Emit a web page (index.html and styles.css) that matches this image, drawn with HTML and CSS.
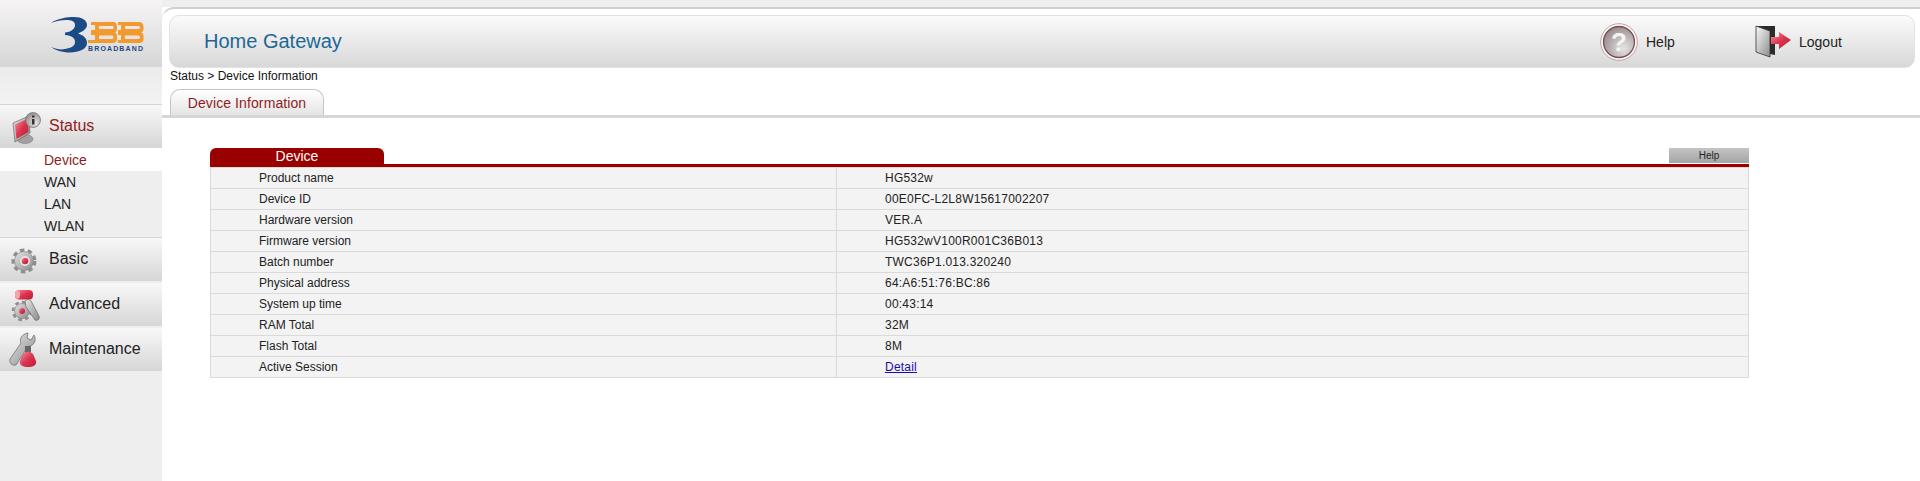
FILE: index.html
```html
<!DOCTYPE html>
<html lang="en">

<head>
    <meta charset="UTF-8">
    <title>Home Gateway</title>
    <link rel="stylesheet" href="styles.css">
</head>

<body>
    <svg class="defs" width="0" height="0">
        <defs>
            <linearGradient id="metal" x1="0" y1="0" x2="1" y2="1">
                <stop offset="0" stop-color="#e6e6e6" />
                <stop offset="1" stop-color="#8a8a8a" />
            </linearGradient>
            <linearGradient id="red" x1="0" y1="0" x2="1" y2="1">
                <stop offset="0" stop-color="#f4939f" />
                <stop offset="0.5" stop-color="#dd3450" />
                <stop offset="1" stop-color="#b81c33" />
            </linearGradient>
            <linearGradient id="door" x1="0" y1="0" x2="1" y2="1">
                <stop offset="0" stop-color="#fafafa" />
                <stop offset="1" stop-color="#8c8c8c" />
            </linearGradient>
            <radialGradient id="ball" cx="0.65" cy="0.7" r="0.8">
                <stop offset="0" stop-color="#e8e4e4" />
                <stop offset="1" stop-color="#8f8484" />
            </radialGradient>
        </defs>
    </svg>

    <div class="sidebar">
        <div class="logo-box">
            <svg class="logo" width="94" height="36" viewBox="0 0 94 36">
                <path fill="#1c4a86" d="M1 6 C8 1 18 0 24 0 C32 0 37 3 37 8 C37 12 32 15 28 16.500 C33 18 37 21 37 26 C37 32 29 35.500 20 35.500 C12 35.500 5 33 1 30 C6 32 11 33 15 32 C21 31 25 29 25 25 C25 21 22 18.500 15 18 L15 15.500 C21 15 25 12 25 8 C25 4 21 3 16 3 C11 3 6 4 1 6 Z" />
                <path fill="#f29a2e" fill-rule="evenodd" d="M41 5 H63 C66 5 67 7 67 10 V12 C67 13.500 66.500 14.500 65 15.500 C66.500 16.500 67 17.500 67 19 V22 C67 24.500 65.500 26 63 26 H38 V23 H45 V18 H41 V13 H45 V8 H41 Z M49 9 V12 H62 C63 12 63.500 11.500 63.500 10.500 C63.500 9.500 63 9 62 9 Z M49 18.500 V22 H62 C63 22 63.500 21.500 63.500 20.300 C63.500 19 63 18.500 62 18.500 Z" />
                <path fill="#f29a2e" fill-rule="evenodd" d="M68 5 H89 C92 5 93.500 7 93.500 10 V12 C93.500 13.500 93 14.500 91.500 15.500 C93 16.500 93.500 17.500 93.500 19 V22 C93.500 24.500 92 26 89 26 H68 V23 H71 V18 H68 V13 H71 V8 H68 Z M75 9 V12 H88 C89 12 90 11.500 90 10.500 C90 9.500 89 9 88 9 Z M75 18.500 V22 H88 C89 22 90 21.500 90 20.300 C90 19 89 18.500 88 18.500 Z" />
                <text x="38" y="34" class="logo-text" textLength="55">BROADBAND</text>
            </svg>
        </div>
        <div class="side-gap"></div>

        <div class="menu-item active">
            <svg class="menu-icon" viewBox="0 0 36 36">
                <ellipse cx="17" cy="30" rx="8" ry="4.500" fill="#a0a0a0" stroke="#777" stroke-width="0.500" />
                <path d="M5 14 L21 7 L22 24 L7 33 Z" fill="url(#metal)" stroke="#555" stroke-width="0.600" />
                <path d="M7 15.500 L20 9.500 L20.500 23 L8.500 30 Z" fill="url(#red)" />
                <circle cx="25" cy="11" r="7.500" fill="url(#ball)" stroke="#6f6f6f" stroke-width="0.700" />
                <rect x="24" y="10" width="2.500" height="5.500" fill="#333" />
                <rect x="24" y="6.500" width="2.500" height="2" fill="#333" />
            </svg>
            Status
        </div>
        <div class="submenu">
            <div class="sub-item selected">Device</div>
            <div class="sub-item">WAN</div>
            <div class="sub-item">LAN</div>
            <div class="sub-item">WLAN</div>
        </div>

        <div class="menu-item">
            <svg class="menu-icon" viewBox="0 0 36 36">
                <circle cx="16" cy="19" r="11" fill="none" stroke="#8e8e8e" stroke-width="3" stroke-dasharray="4.500 3.400" />
                <circle cx="16" cy="19" r="9.500" fill="url(#metal)" stroke="#777" stroke-width="0.600" />
                <circle cx="17" cy="19" r="5" fill="#e8e8e8" />
                <circle cx="17" cy="19" r="3.300" fill="url(#red)" />
            </svg>
            Basic
        </div>
        <div class="menu-item">
            <svg class="menu-icon" viewBox="0 0 36 36">
                <rect x="7" y="3" width="18" height="9.500" rx="4" fill="url(#red)" />
                <ellipse cx="9.500" cy="7.700" rx="2.500" ry="4.200" fill="#f6a5ae" />
                <circle cx="14" cy="24" r="9" fill="none" stroke="#8e8e8e" stroke-width="2.500" stroke-dasharray="3.800 3.200" />
                <circle cx="14" cy="24" r="7.500" fill="url(#metal)" stroke="#777" stroke-width="0.600" />
                <circle cx="14" cy="24" r="3" fill="url(#red)" />
                <path d="M17 14 C19 12 22 12 23 14 L31 29 C32 32 30 34 27 33 L18 20 Z" fill="url(#metal)" stroke="#666" stroke-width="0.700" />
            </svg>
            Advanced
        </div>
        <div class="menu-item">
            <svg class="menu-icon" viewBox="0 0 36 36">
                <path d="M2 27 L13 11 C11 7 14 2 20 1 L19 6 L23 8 L26 3 C29 8 26 14 20 14.500 L8 33 C4 34 1 31 2 27 Z" fill="url(#metal)" stroke="#666" stroke-width="0.700" />
                <rect x="17" y="14" width="6" height="7" fill="#666" />
                <path d="M15 22 C18 19 22 19 25 22 L28 29 C29 33 25 35 20 35 C15 35 11 33 12 29 Z" fill="url(#red)" />
            </svg>
            Maintenance
        </div>
    </div>

    <div class="main">
        <div class="top-strip"></div>
        <div class="header-wrap">
            <div class="header">
                <span class="title">Home Gateway</span>
                <div class="header-links">
                    <div class="header-link help-link">
                        <svg width="38" height="38" viewBox="0 0 38 38">
                            <circle cx="19" cy="19" r="18.300" fill="#fff" stroke="#b08a8e" stroke-width="0.800" />
                            <circle cx="19" cy="19" r="15.500" fill="url(#ball)" stroke="#7c4a50" stroke-width="1.300" />
                            <text x="19" y="28" class="help-mark">?</text>
                        </svg>
                        Help
                    </div>
                    <div class="header-link logout-link">
                        <svg width="37" height="33" viewBox="0 0 37 33">
                            <path d="M1 1 L20 1 V30 L15 29 V7 Z" fill="#2b2b2b" />
                            <path d="M1 1 L15 6 V32 L1 27 Z" fill="url(#door)" stroke="#333" stroke-width="0.800" />
                            <path d="M16 12 H24 V7 L36 15 L24 24 V19 H16 Z" fill="url(#red)" />
                        </svg>
                        Logout
                    </div>
                </div>
            </div>
        </div>

        <div class="breadcrumb">Status &gt; Device Information</div>
        <div class="tabs">
            <div class="tab">Device Information</div>
        </div>

        <div class="content">
            <div class="panel-head">
                <div class="panel-title">Device</div>
                <div class="panel-help">Help</div>
            </div>
            <table class="info-table">
                <tr><td>Product name</td><td>HG532w</td></tr>
                <tr><td>Device ID</td><td>00E0FC-L2L8W15617002207</td></tr>
                <tr><td>Hardware version</td><td>VER.A</td></tr>
                <tr><td>Firmware version</td><td>HG532wV100R001C36B013</td></tr>
                <tr><td>Batch number</td><td>TWC36P1.013.320240</td></tr>
                <tr><td>Physical address</td><td>64:A6:51:76:BC:86</td></tr>
                <tr><td>System up time</td><td>00:43:14</td></tr>
                <tr><td>RAM Total</td><td>32M</td></tr>
                <tr><td>Flash Total</td><td>8M</td></tr>
                <tr><td>Active Session</td><td><a href="#">Detail</a></td></tr>
            </table>
        </div>
    </div>
</body>

</html>
```

FILE: styles.css
```css
html, body {
    height: 100%;
}

body {
    display: flex;
    margin: 0;
    overflow: hidden;
    font-family: "Liberation Sans", Arial, sans-serif;
    color: #222;
    background-color: #fff;
}

.defs {
    display: block;
    width: 0;
    height: 0;
}

.sidebar {
    width: 162px;
    flex-shrink: 0;
    background-color: #eeeeee;
}

.logo-box {
    height: 67px;
    padding-left: 50px;
    padding-top: 17px;
    box-sizing: border-box;
    background: linear-gradient(#f6f4f4, #d6d6d6);
}

.logo {
    display: block;
}

.logo-text {
    font-family: "Liberation Sans", Arial, sans-serif;
    font-size: 7px;
    font-weight: bold;
    fill: #1c4a86;
}

.side-gap {
    height: 37px;
    background: linear-gradient(#ebebeb, #f3f3f3);
    border-bottom: 1px solid #d4d4d4;
}

.menu-item {
    display: flex;
    align-items: center;
    height: 43px;
    box-sizing: border-box;
    margin-bottom: 2px;
    padding: 0 0 1px 8px;
    font-size: 16px;
    background: linear-gradient(#f8f8f8, #d6d6d6);
}

.menu-item.active {
    color: #8f1d1d;
    margin-bottom: 0;
}

.menu-icon {
    width: 36px;
    height: 36px;
    flex-shrink: 0;
    align-self: flex-start;
    margin: 4px 5px 0 0;
}

.submenu {
    font-size: 14px;
    border-bottom: 1px solid #d4d4d4;
}

.sub-item {
    height: 22px;
    line-height: 22px;
    padding-left: 44px;
}

.sub-item.selected {
    height: 23px;
    line-height: 25px;
    color: #8f1d1d;
    background-color: #fff;
}

.main {
    flex-grow: 1;
    min-width: 0;
}

.top-strip {
    height: 7px;
    background-color: #f1eeee;
}

.header-wrap {
    height: 58px;
    padding: 6px 5px 0 7px;
    box-sizing: border-box;
    border-top: 2px solid #cfcfcf;
    border-top-left-radius: 12px;
}

.header {
    display: flex;
    justify-content: space-between;
    align-items: center;
    height: 53px;
    box-sizing: border-box;
    padding-left: 34px;
    border: 1px solid #e2e2e2;
    border-radius: 10px;
    background: linear-gradient(#fbfbfb, #d8d8d8);
}

.title {
    font-size: 20px;
    color: #1d6796;
}

.header-links {
    display: flex;
    align-items: center;
}

.header-link {
    display: flex;
    align-items: center;
    font-size: 14px;
    gap: 8px;
}

.help-link {
    width: 155px;
}

.logout-link {
    width: 159px;
    gap: 7px;
}

.help-mark {
    font-family: "Liberation Sans", Arial, sans-serif;
    font-size: 26px;
    font-weight: bold;
    fill: #f4f4f4;
    text-anchor: middle;
}

.breadcrumb {
    height: 24px;
    line-height: 23px;
    padding-left: 8px;
    font-size: 12px;
    color: #111;
}

.tabs {
    height: 26px;
    padding-left: 8px;
    border-bottom: 3px solid #d6d6d6;
}

.tab {
    width: 154px;
    height: 26px;
    line-height: 27px;
    box-sizing: border-box;
    text-align: center;
    font-size: 14px;
    letter-spacing: 0.1px;
    color: #8f1d1d;
    border: 1px solid #c4c4c4;
    border-bottom: none;
    border-radius: 10px 10px 0 0;
    background: linear-gradient(#fff, #e4e4e4);
}

.content {
    padding: 30px 0 0 48px;
    width: 1539px;
}

.panel-head {
    display: flex;
    justify-content: space-between;
    align-items: flex-end;
    height: 16px;
    border-bottom: 3px solid #990000;
}

.panel-title {
    width: 174px;
    height: 16px;
    line-height: 17px;
    text-align: center;
    font-size: 14px;
    color: #fff;
    background-color: #990000;
    border-radius: 6px 6px 0 0;
}

.panel-help {
    width: 80px;
    height: 15px;
    margin-bottom: 1px;
    line-height: 15px;
    text-align: center;
    font-size: 10px;
    background: linear-gradient(#c4c4c4, #a4a4a4);
}

.info-table {
    width: 100%;
    border-collapse: collapse;
    table-layout: fixed;
    font-size: 12px;
    background-color: #f3f3f3;
}

.info-table td {
    height: 20px;
    padding: 0;
    border: 1px solid #dadada;
}

.info-table td:first-child {
    width: 626px;
    padding-left: 48px;
    box-sizing: border-box;
}

.info-table td:last-child {
    padding-left: 48px;
    letter-spacing: 0.22px;
}

.info-table a {
    color: #1a0dab;
}
```
